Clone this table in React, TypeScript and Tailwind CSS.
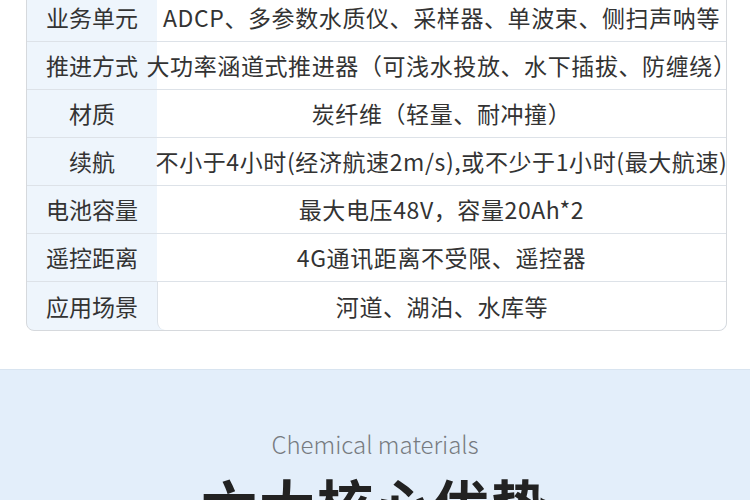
const rows = [
  { label: "业务单元", value: "ADCP、多参数水质仪、采样器、单波束、侧扫声呐等" },
  { label: "推进方式", value: "大功率涵道式推进器（可浅水投放、水下插拔、防缠绕）" },
  { label: "材质", value: "炭纤维（轻量、耐冲撞）" },
  { label: "续航", value: "不小于4小时(经济航速2m/s),或不少于1小时(最大航速)" },
  { label: "电池容量", value: "最大电压48V，容量20Ah*2" },
  { label: "遥控距离", value: "4G通讯距离不受限、遥控器" },
  { label: "应用场景", value: "河道、湖泊、水库等" },
];

const cjk = { fontFamily: '"Noto Sans CJK SC", "Noto Sans", sans-serif' };

export default function App() {
  return (
    <div className="w-[750px] h-[500px] overflow-hidden bg-white" style={cjk}>
      <div className="pl-[26px] pr-[23px]">
        <div className="-mt-[7px] border border-[#d6d9dd] rounded-b-[8px] bg-[#eef5fc] grid grid-cols-[130px_minmax(0,1fr)]">
          {rows.map((r, i) => {
            const last = i === rows.length - 1;
            return (
              <div key={r.label} className="contents">
                <div
                  className={`h-[48px] flex items-center justify-center text-[23px] text-[#333] ${
                    last ? "" : "border-b border-[#dde2e8]"
                  }`}
                >
                  {r.label}
                </div>
                <div
                  className={`h-[48px] flex items-center justify-center bg-white text-[23px] tracking-[0.6px] text-[#333] whitespace-nowrap ${
                    last ? "border-l border-[#dde2e8] rounded-bl-[8px] rounded-br-[8px]" : "border-b border-[#dde2e8]"
                  }`}
                >
                  {r.value}
                </div>
              </div>
            );
          })}
        </div>
      </div>
      <div className="mt-[38px] border-t border-[#d8e4f0] bg-[#e3eefa] h-[200px] flex flex-col items-center">
        <p className="mt-[62px] text-[24px] font-light text-[#777b80] leading-none">Chemical materials</p>
        <p className="mt-[19px] text-[56px] font-bold tracking-[2px] text-[#222] leading-none">六大核心优势</p>
      </div>
    </div>
  );
}
